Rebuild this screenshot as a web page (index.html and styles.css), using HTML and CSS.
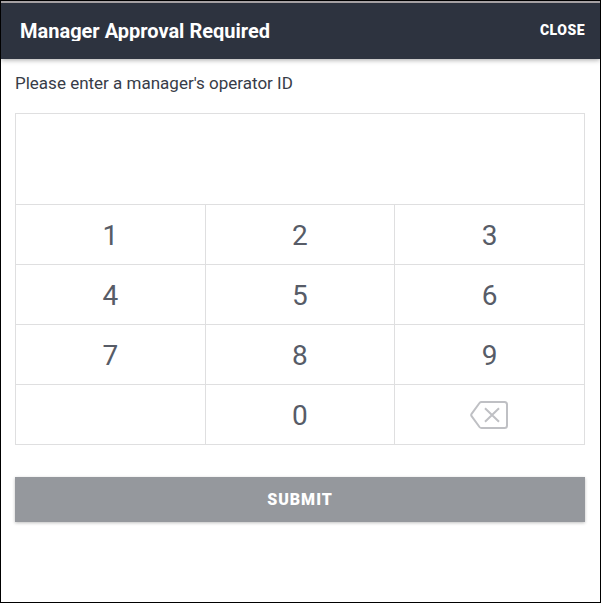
FILE: index.html
```
<!DOCTYPE html>
<html lang="en">
<head>
    <meta charset="UTF-8">
    <meta name="viewport" content="width=device-width, initial-scale=1.0">
    <title>Manager Approval Required</title>
    <link rel="stylesheet" href="styles.css">
</head>
<body>

    <div class="modal">
        <header class="header">
            <h1 class="title">Manager Approval Required</h1>
            <button type="button" class="close-btn">CLOSE</button>
        </header>

        <form class="content" id="approvalForm">
            <label class="prompt" for="operatorId">Please enter a manager's operator ID</label>

            <div class="keypad">
                <input type="password" class="display" id="operatorId" name="operatorId" readonly>
                <button type="button" class="key">1</button>
                <button type="button" class="key">2</button>
                <button type="button" class="key">3</button>
                <button type="button" class="key">4</button>
                <button type="button" class="key">5</button>
                <button type="button" class="key">6</button>
                <button type="button" class="key">7</button>
                <button type="button" class="key">8</button>
                <button type="button" class="key">9</button>
                <div class="key-blank"></div>
                <button type="button" class="key">0</button>
                <button type="button" class="key key-delete" aria-label="Delete">
                    <svg width="40" height="28" viewBox="0 0 40 28" fill="none" stroke="currentColor" stroke-width="2" aria-hidden="true">
                        <path d="M11.5 1H34.5Q37 1 37 3.5V24.5Q37 27 34.5 27H11.5Q10.3 27 9.5 26L1.6 15.2Q.8 14 1.6 12.8L9.5 2Q10.3 1 11.5 1Z"/>
                        <path d="M15 7.2L29 20.8M29 7.2L15 20.8"/>
                    </svg>
                </button>
            </div>

            <button type="submit" class="submit-btn">SUBMIT</button>
        </form>
    </div>

    <script>
        const operatorId = document.getElementById('operatorId');

        // Number keys add a digit, the delete key removes the last one
        document.querySelectorAll('.key').forEach(function(key) {
            key.addEventListener('click', function() {
                if (key.classList.contains('key-delete')) {
                    operatorId.value = operatorId.value.slice(0, -1);
                } else {
                    operatorId.value += key.textContent;
                }
            });
        });

        document.getElementById('approvalForm').addEventListener('submit', function(e) {
            e.preventDefault();
        });
    </script>

</body>
</html>
```
FILE: styles.css
```
* {
    box-sizing: border-box;
}
body {
    font-family: Roboto, 'Liberation Sans', sans-serif;
    margin: 0;
    background: #fff;
    color: #373c48;
}
button, input {
    font-family: inherit;
    border: none;
    border-radius: 0;
    margin: 0;
    padding: 0;
}
button {
    cursor: pointer;
}
.modal {
    min-height: 100vh;
    border: 1px solid #000;
}
.header {
    display: flex;
    justify-content: space-between;
    align-items: center;
    height: 58px;
    padding: 0 15px 0 19px;
    border-top: 2px solid #a5a1a3;
    background: #2d333f;
    color: #fff;
    box-shadow: 0 1px 5px rgba(0, 0, 0, 0.35);
}
.title {
    margin: 0;
    font-size: 20px;
    font-weight: 700;
    line-height: 20px;
    overflow: hidden;
}
.close-btn {
    padding-bottom: 2px;
    background: none;
    color: #fff;
    font-size: 14px;
    font-weight: 900;
    letter-spacing: 0.5px;
}
.content {
    padding: 12px 15px 15px 14px;
}
.prompt {
    display: block;
    margin-bottom: 18px;
    font-size: 17px;
    line-height: 24px;
}
.keypad {
    display: grid;
    grid-template-columns: repeat(3, 1fr);
    gap: 1px;
    padding: 1px;
    background: #dfdfe0;
}
.display {
    grid-column: 1 / -1;
    width: 100%;
    height: 90px;
    background: #fff;
    color: #575c67;
    font-size: 28px;
    text-align: center;
    outline: none;
}
.key, .key-blank {
    display: flex;
    justify-content: center;
    align-items: center;
    height: 59px;
    padding-top: 2px;
    background: #fff;
    color: #575c67;
    font-size: 28px;
}
.key-delete {
    padding-top: 0;
    color: #bfc0c4;
}
.key:active {
    background: #f2f2f2;
}
.submit-btn {
    display: block;
    width: 100%;
    height: 45px;
    margin-top: 32px;
    background: #95989d;
    color: #fff;
    font-size: 16px;
    font-weight: 900;
    letter-spacing: 1px;
    box-shadow: 0 1px 3px rgba(0, 0, 0, 0.25);
}
```
